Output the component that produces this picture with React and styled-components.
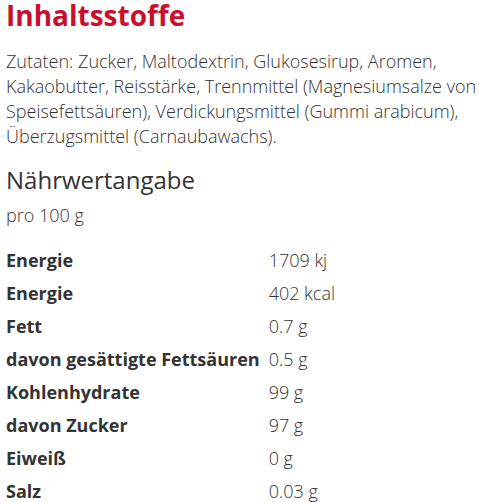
import styled, { createGlobalStyle } from "styled-components";
import * as React from "react";

const GlobalStyle = createGlobalStyle`
    body {
        margin: 0;
        background: #fff;
        font-family: "Open Sans", "Liberation Sans", sans-serif;
        color: #333;
    }
`

const Wrapper = styled.div`
    padding: 0 0 0 6px;
`
const Title = styled.h2`
    margin: 0;
    font-size: 28px;
    line-height: 30px;
    font-weight: 700;
    color: #c8102e;
`
const Ingredients = styled.p`
    margin: 19px 0 0;
    font-size: 18px;
    line-height: 25px;
    font-weight: 300;
`
const SubTitle = styled.h3`
    margin: 15px 0 0;
    font-size: 24px;
    line-height: 32px;
    font-weight: 400;
`
const Unit = styled.div`
    margin-top: 7px;
    font-size: 18px;
    line-height: 25px;
    font-weight: 300;
`
const Table = styled.table`
    margin-top: 15px;
    border-collapse: collapse;
    font-size: 18px;
    td {
        padding: 0;
        height: 33px;
        vertical-align: middle;
    }
`
const Label = styled.td`
    font-weight: 700;
    padding-right: 9px !important;
    white-space: nowrap;
`
const Value = styled.td`
    font-weight: 300;
`

const rows = [
    ["Energie", "1709 kj"],
    ["Energie", "402 kcal"],
    ["Fett", "0.7 g"],
    ["davon gesättigte Fettsäuren", "0.5 g"],
    ["Kohlenhydrate", "99 g"],
    ["davon Zucker", "97 g"],
    ["Eiweiß", "0 g"],
    ["Salz", "0.03 g"],
]

const App = () => {
    return (
        <>
            <GlobalStyle/>
            <Wrapper>
                <Title>Inhaltsstoffe</Title>
                <Ingredients>
                    Zutaten: Zucker, Maltodextrin, Glukosesirup, Aromen, Kakaobutter, Reisstärke, Trennmittel (Magnesiumsalze von Speisefettsäuren), Verdickungsmittel (Gummi arabicum), Überzugsmittel (Carnaubawachs).
                </Ingredients>
                <SubTitle>Nährwertangabe</SubTitle>
                <Unit>pro 100 g</Unit>
                <Table>
                    <tbody>
                        {rows.map(([label, value], index) => (
                            <tr key={index}>
                                <Label>{label}</Label>
                                <Value>{value}</Value>
                            </tr>
                        ))}
                    </tbody>
                </Table>
            </Wrapper>
        </>
    )
}
export default App;
